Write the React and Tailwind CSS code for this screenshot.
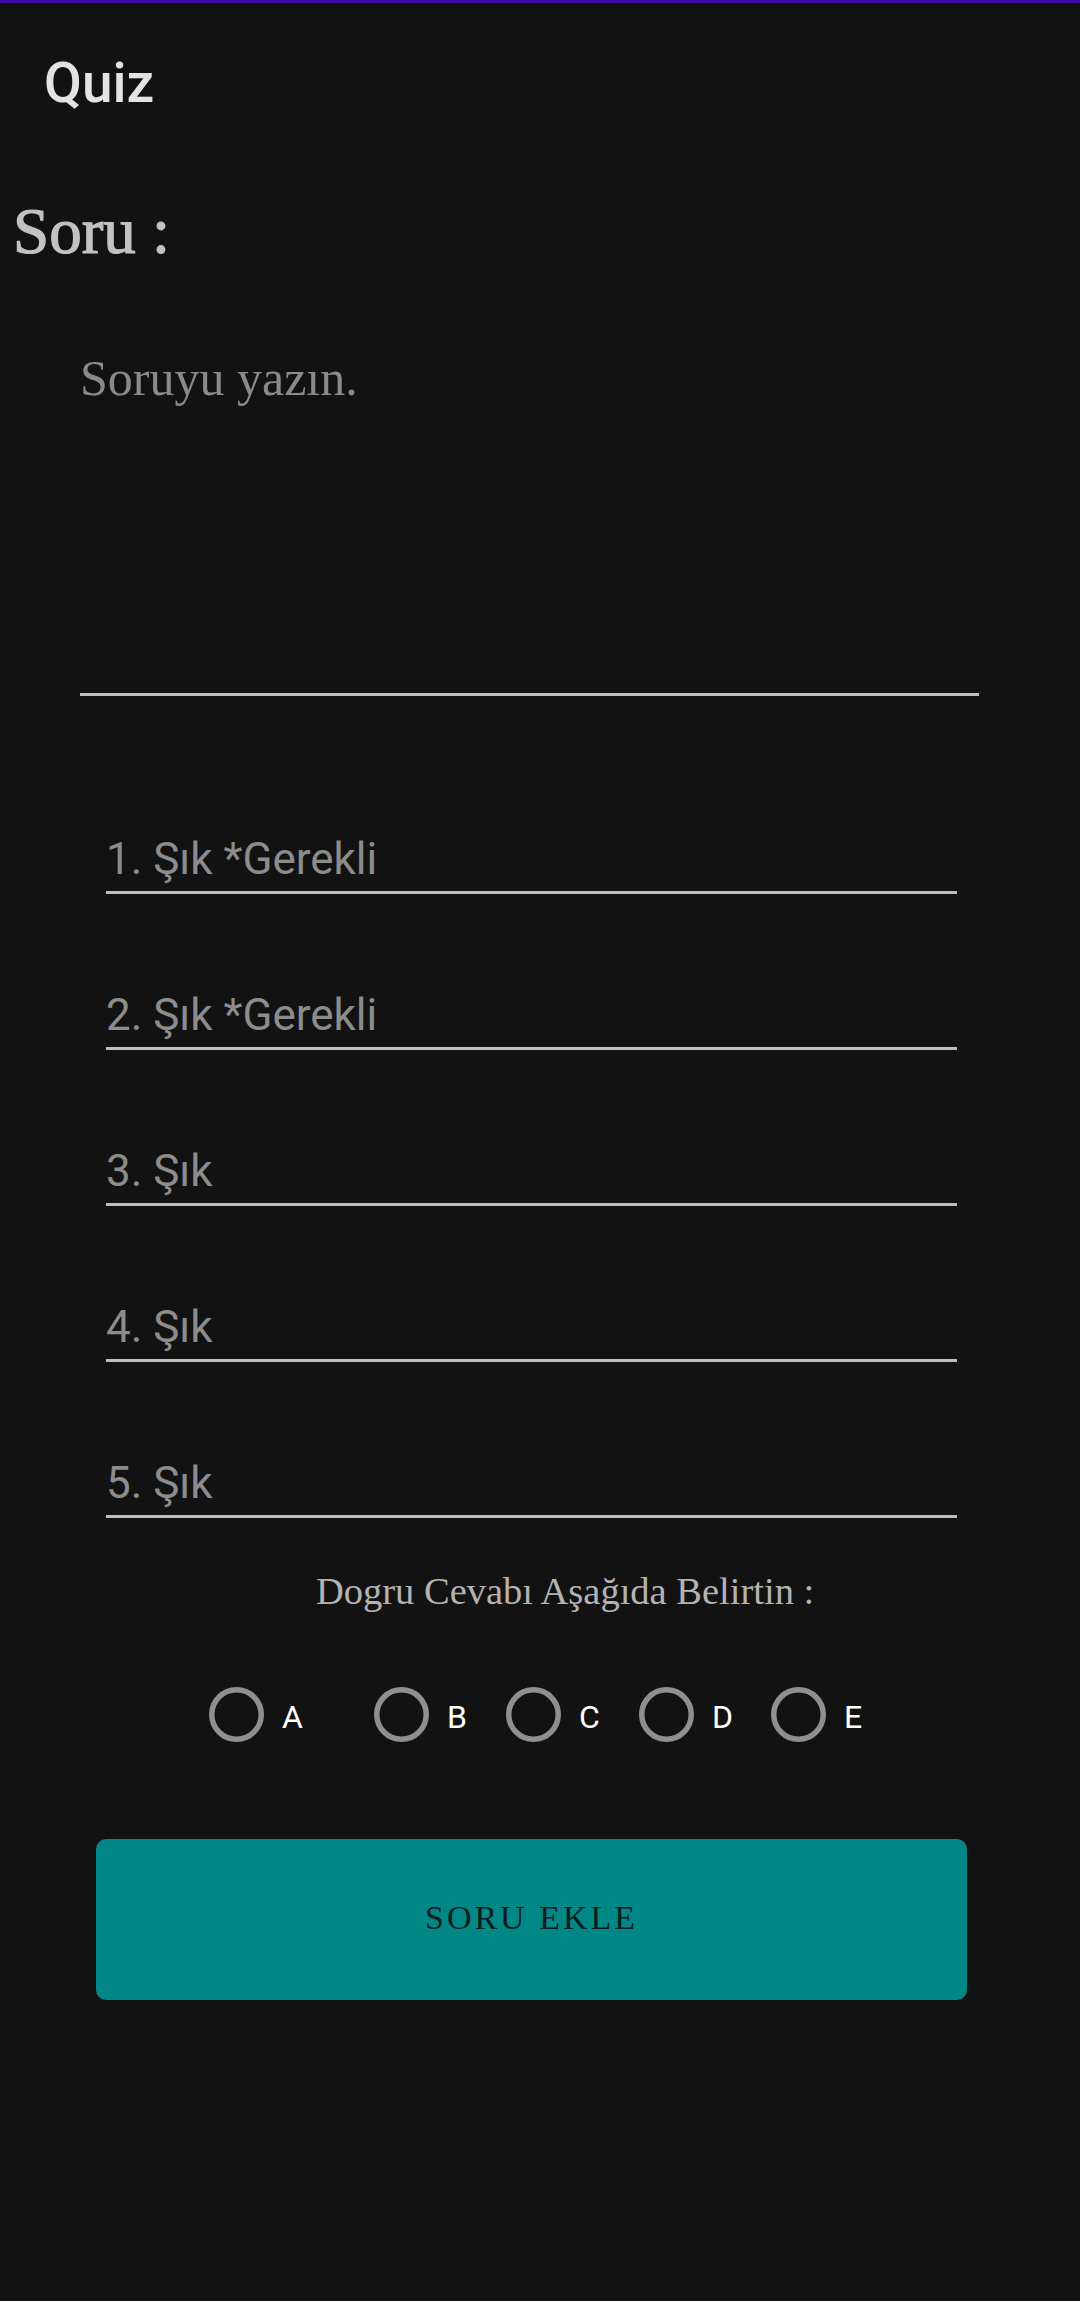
import { useState } from "react";

const serif = "font-['Liberation_Serif',serif]";
const sans = "font-['Roboto',sans-serif]";

const options = ["1. Şık *Gerekli", "2. Şık *Gerekli", "3. Şık", "4. Şık", "5. Şık"];

const answers = [
  { key: "A", width: "w-[165px]" },
  { key: "B", width: "w-[132px]" },
  { key: "C", width: "w-[133px]" },
  { key: "D", width: "w-[132px]" },
  { key: "E", width: "" },
];

function RadioCircle({ checked }) {
  return (
    <svg width="55" height="55" viewBox="0 0 55 55" className="shrink-0">
      <circle cx="27.5" cy="27.5" r="24.75" fill="none" stroke={checked ? "#03dac5" : "#8f8f8f"} strokeWidth="5.5" />
      {checked && <circle cx="27.5" cy="27.5" r="13" fill="#03dac5" />}
    </svg>
  );
}

function App() {
  const [question, setQuestion] = useState("");
  const [answer, setAnswer] = useState(null);

  return (
    <div className="min-h-screen bg-[#121212]">
      <div className="h-[3px] bg-[#3a0ba8]" />

      <header className="pt-[52px] pl-[44px]">
        <h1 className={`${sans} text-[55px] leading-[56px] font-medium text-[#e3e3e3]`}>Quiz</h1>
      </header>

      <h2 className={`${serif} mt-[85px] pl-[13px] text-[65px] leading-[70px] text-[#c2c2c2] [-webkit-text-stroke:1.2px_#c2c2c2]`}>
        Soru :
      </h2>

      <div className="mt-[84px] ml-[80px] w-[899px] h-[346px] border-b-[3px] border-[#bdbdbd]">
        <textarea
          className={`${serif} w-full h-full resize-none bg-transparent text-[50px] leading-[56px] text-[#e0e0e0] placeholder:text-[#8a8a8a] outline-none`}
          placeholder="Soruyu yazın."
          value={question}
          onChange={(event) => setQuestion(event.target.value)}
        />
      </div>

      <div className="mt-[137px] ml-[106px] w-[851px] flex flex-col gap-[95px]">
        {options.map((option) => (
          <div key={option} className="pb-[6px] border-b-[3px] border-[#bdbdbd]">
            <input
              className={`${sans} w-full bg-transparent text-[44px] leading-[52px] h-[52px] text-[#e0e0e0] placeholder:text-[#8c8c8c] outline-none`}
              placeholder={option}
            />
          </div>
        ))}
      </div>

      <p className={`${serif} mt-[51px] pl-[316px] text-[38.5px] leading-[44px] text-[#b3b3b3]`}>
        Dogru Cevabı Aşağıda Belirtin :
      </p>

      <div className="mt-[74px] pl-[209px] flex items-start">
        {answers.map((item) => (
          <button
            key={item.key}
            type="button"
            className={`${item.width} flex items-start gap-[18px]`}
            onClick={() => setAnswer(item.key)}
          >
            <RadioCircle checked={answer === item.key} />
            <span className={`${sans} pt-[3px] text-[32px] leading-[55px] text-white`}>{item.key}</span>
          </button>
        ))}
      </div>

      <div className="mt-[94px] pl-[96px]">
        <button
          type="button"
          className="w-[871px] h-[161px] rounded-[10px] bg-[#018786] flex items-center justify-center"
        >
          <span className={`${serif} pb-[4px] text-[34px] leading-[40px] tracking-[3px] text-[#0b1c1c]`}>SORU EKLE</span>
        </button>
      </div>
    </div>
  );
}

export default App;
